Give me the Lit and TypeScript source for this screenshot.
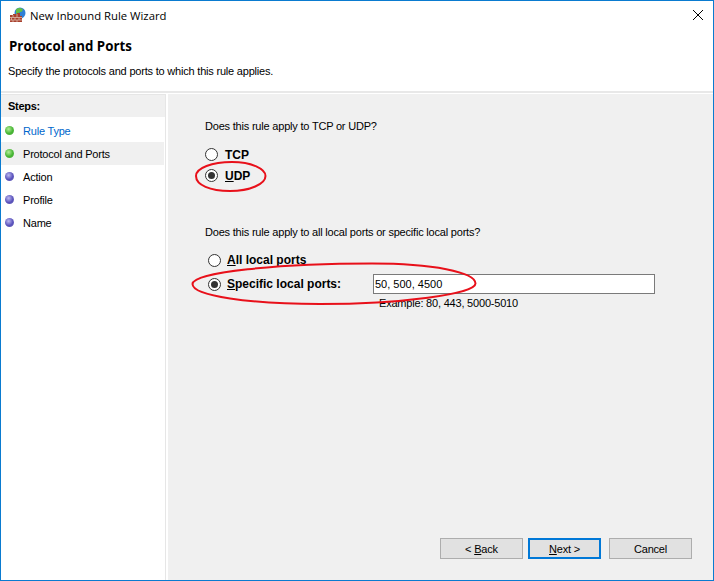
import { LitElement, html, css } from "lit";
import { customElement } from "lit/decorators.js";

@customElement("app-root")
export class AppRoot extends LitElement {
  static styles = css`
    :host {
      display: block;
      width: 714px;
      height: 581px;
      font-family: "Liberation Sans", Arial, sans-serif;
      font-size: 11px;
      letter-spacing: -0.2px;
      color: #000;
    }
    * { box-sizing: border-box; }
    .window {
      position: relative;
      width: 714px;
      height: 581px;
      border: 1px solid #0a7bd0;
      background: #fff;
      display: flex;
      flex-direction: column;
      overflow: hidden;
    }
    .titlebar { height: 28px; display: flex; align-items: center; padding-left: 8px; gap: 4px; flex: none; }
    .title-text { font-family: "Open Sans", sans-serif; font-size: 11.3px; letter-spacing: 0; }
    .close { margin-left: auto; margin-right: 10px; width: 10px; height: 10px; display: block; }
    .head { height: 64px; padding-left: 8px; flex: none; border-bottom: 2px solid #e8e8e8; }
    .head h1 { margin: 0; font-family: "Open Sans", sans-serif; font-size: 13.3px; font-weight: 700; line-height: 18px; padding-top: 8px; letter-spacing: 0; }
    .head p { margin: 8px 0 0 -1px; line-height: 16px; }
    .body { flex: 1; display: flex; min-height: 0; padding-top: 1px; }
    .side { width: 165px; flex: none; border-right: 1px solid #e6e6e6; border-top: 1px solid #e6e6e6; }
    .steps-h { height: 22px; background: #f0f0f0; font-weight: 700; line-height: 22px; padding-left: 7px; letter-spacing: -0.3px; }
    .steps { padding: 2px 1px 0 0; }
    .step { height: 23px; display: flex; align-items: center; gap: 10px; padding-left: 4px; }
    .step.cur { background: #f0f0f0; }
    .step.link { color: #0066cc; }
    .dot { width: 9px; height: 9px; border-radius: 50%; flex: none; margin-right: -1px; }
    .dot.g { background: radial-gradient(circle at 40% 35%, #b4ec98, #45b532 55%, #5cab4c); }
    .dot.b { background: radial-gradient(circle at 40% 35%, #bdb9f0, #5a52bc 55%, #6a66b4); }
    .gap { width: 2px; flex: none; }
    .main { flex: 1; background: #f0f0f0; padding: 24px 0 0 37px; position: relative; display: flex; flex-direction: column; }
    .q { line-height: 16px; }
    .q2 { margin-top: 40px; }
    .group { display: flex; flex-direction: column; margin-top: 11px; }
    .g1 { gap: 3px; }
    .g1 .row > span:last-child { padding-top: 2px; }
    .g2 { margin-left: 3px; gap: 5px; }
    .row { min-height: 18px; display: flex; align-items: center; gap: 7px; font-weight: 700; font-size: 12px; letter-spacing: 0; }
    .g2 .row { gap: 6px; }
    .label { width: 140px; flex: none; padding-bottom: 1px; }
    .radio { width: 13px; height: 13px; border: 1px solid #333; border-radius: 50%; background: #fff; display: flex; align-items: center; justify-content: center; flex: none; }
    .radio.on::after { content: ""; width: 7px; height: 7px; border-radius: 50%; background: #333; }
    .ports { width: 282px; height: 20px; background: #fff; border: 1px solid #7a7a7a; padding-left: 1px; line-height: 18px; font-weight: 400; font-size: 11px; }
    .example { margin: 1px 0 0 174px; line-height: 16px; }
    .buttons { position: absolute; right: 21px; bottom: 21px; display: flex; }
    .btn { width: 83px; height: 21px; background: #e1e1e1; border: 1px solid #adadad; text-align: center; line-height: 21px; }
    .btn.primary { width: 73px; margin: 0 8px 0 5px; border: 2px solid #0078d7; line-height: 19px; }
    .ann { position: absolute; left: -1px; top: -1px; pointer-events: none; }
  `;

  render() {
    return html`<div class="window">
      <div class="titlebar">
        <svg width="17" height="17" viewBox="0 0 17 17">
          <circle cx="11" cy="6" r="5.500" fill="#2f7fd6"/>
          <path d="M7 2.500c2-2 5-2 7 0l-1 2-3 1-1 2-2-1z" fill="#63bf45"/>
          <path d="M1 8h3V7h4V6h3v3h2v6H1z" fill="#a8402e"/>
          <path d="M1 10.500h12M1 13h12M4 8v2.500M8 7v3.500M2.500 10.500V13M6 10.500V13M10 10.500V13M4 13v2M8 13v2" stroke="#dcb9a9" stroke-width=".8" fill="none"/>
        </svg>
        <span class="title-text">New Inbound Rule Wizard</span>
        <svg class="close" viewBox="0 0 10 10"><path d="M0 0l10 10M10 0L0 10" stroke="#000" stroke-width="1" fill="none"/></svg>
      </div>
      <div class="head">
        <h1>Protocol and Ports</h1>
        <p>Specify the protocols and ports to which this rule applies.</p>
      </div>
      <div class="body">
        <div class="side">
          <div class="steps-h">Steps:</div>
          <div class="steps">
            <div class="step link"><span class="dot g"></span>Rule Type</div>
            <div class="step cur"><span class="dot g"></span>Protocol and Ports</div>
            <div class="step"><span class="dot b"></span>Action</div>
            <div class="step"><span class="dot b"></span>Profile</div>
            <div class="step"><span class="dot b"></span>Name</div>
          </div>
        </div>
        <div class="gap"></div>
        <div class="main">
          <div class="q">Does this rule apply to TCP or UDP?</div>
          <div class="group g1">
            <div class="row"><span class="radio"></span><span>TCP</span></div>
            <div class="row"><span class="radio on"></span><span><u>U</u>DP</span></div>
          </div>
          <div class="q q2">Does this rule apply to all local ports or specific local ports?</div>
          <div class="group g2">
            <div class="row"><span class="radio"></span><span><u>A</u>ll local ports</span></div>
            <div class="row"><span class="radio on"></span><span class="label"><u>S</u>pecific local ports:</span><span class="ports">50, 500, 4500</span></div>
          </div>
          <div class="example">Example: 80, 443, 5000-5010</div>
          <div class="buttons">
            <div class="btn">&lt; <u>B</u>ack</div>
            <div class="btn primary"><u>N</u>ext &gt;</div>
            <div class="btn">Cancel</div>
          </div>
        </div>
      </div>
      <svg class="ann" width="714" height="581" viewBox="0 0 714 581">
        <path d="M196 176C196 168 212 162 232 162C252 162 265.500 169 265.500 176C265.500 184 250 191 230 191C210 191 196 185 196 176Z" fill="none" stroke="#e8101a" stroke-width="2"/>
        <path d="M192.500 284C192.500 272 280 263.500 372 263.500C432 263.500 475.500 272 475.500 283.500C475.500 294 400 304 320 304C250 304 192.500 296 192.500 284Z" fill="none" stroke="#e8101a" stroke-width="2"/>
      </svg>
    </div>`;
  }
}
